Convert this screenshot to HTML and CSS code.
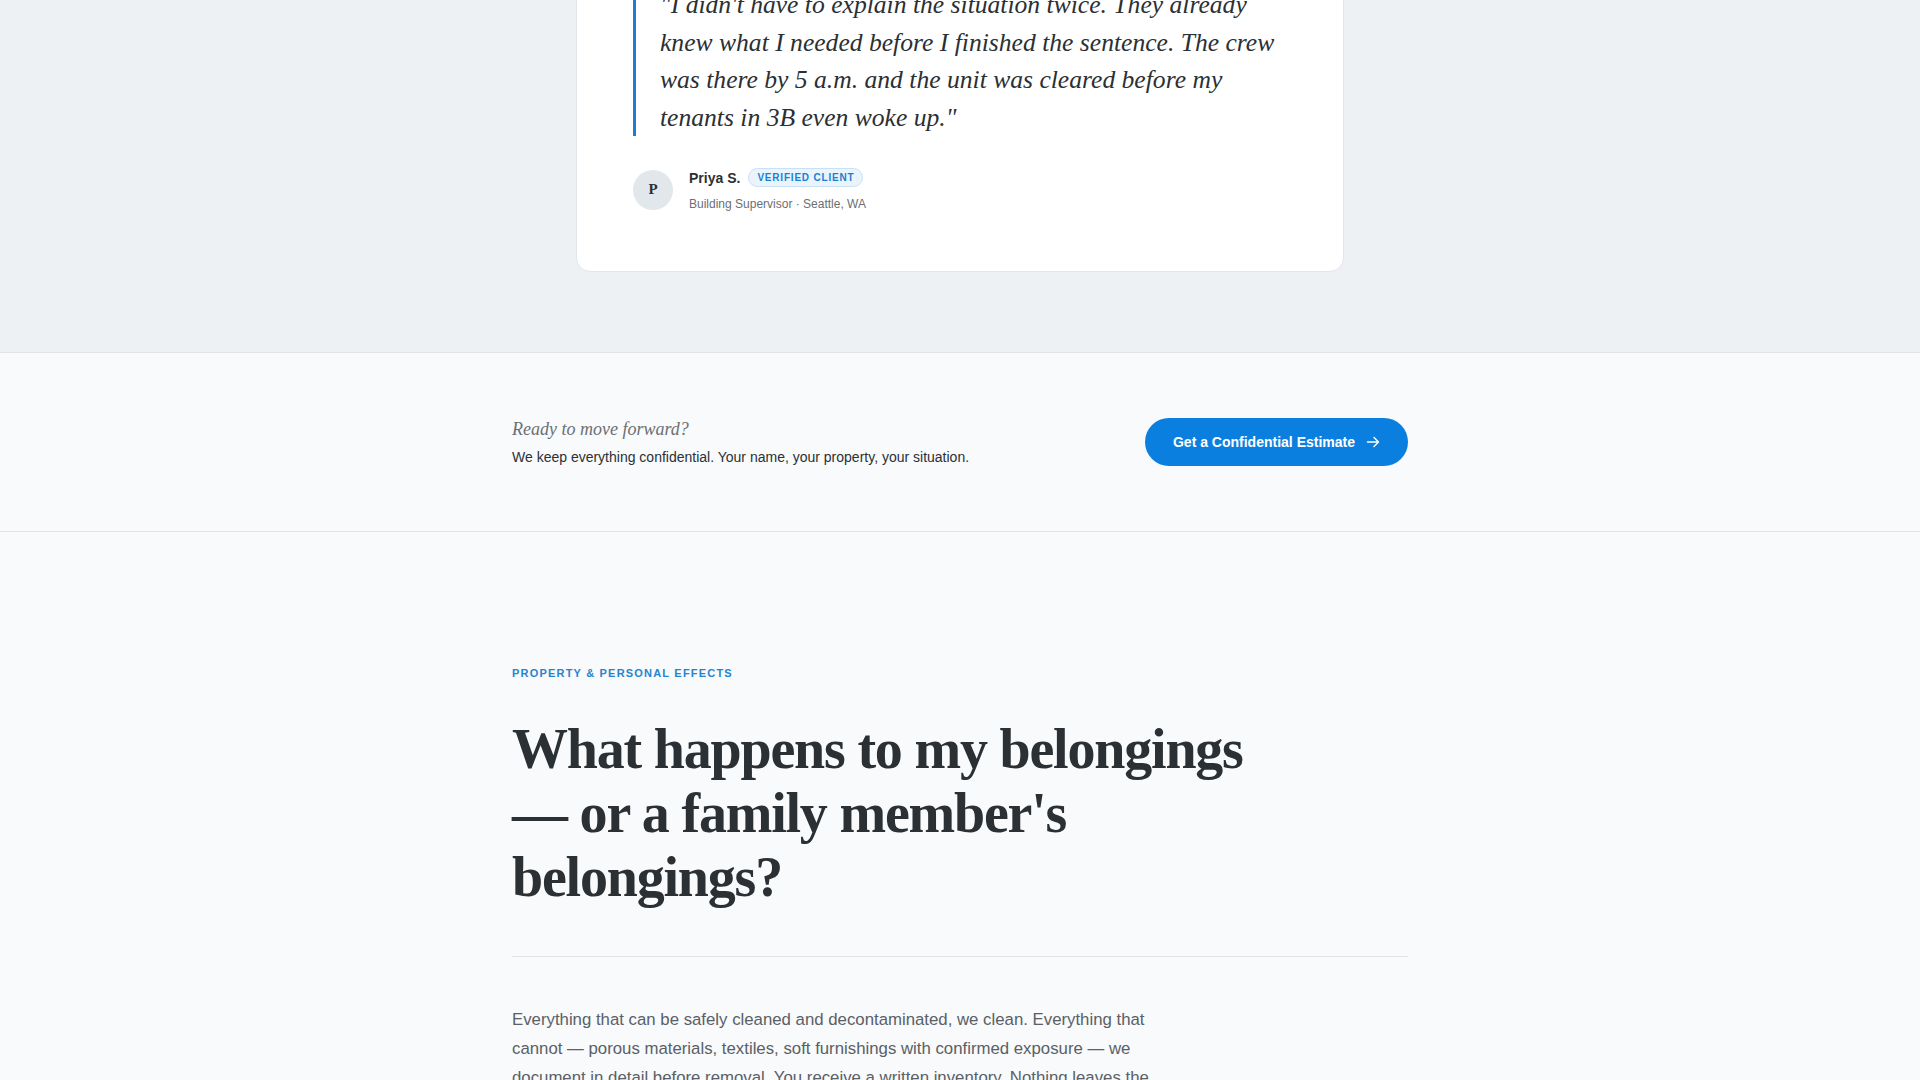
FILE: index.html
```html
<!DOCTYPE html>
<html lang="en">
<head>
  <meta charset="UTF-8" />
  <meta name="viewport" content="width=device-width, initial-scale=1.0" />
  <title>Biohazard Cleanup — Property &amp; Personal Effects</title>
  <link rel="stylesheet" href="styles.css">
</head>
<body>
  <section class="testimonials">
    <div class="card">
      <blockquote class="quote">"I didn't have to explain the situation twice. They already knew what I needed before I finished the sentence. The crew was there by 5 a.m. and the unit was cleared before my tenants in 3B even woke up."</blockquote>
      <div class="author">
        <div class="avatar">P</div>
        <div class="author-info">
          <div class="author-name">Priya S. <span class="badge">Verified client</span></div>
          <div class="author-role">Building Supervisor · Seattle, WA</div>
        </div>
      </div>
    </div>
  </section>

  <section class="cta">
    <div class="container cta-row">
      <div class="cta-text">
        <p class="cta-lead">Ready to move forward?</p>
        <p class="cta-sub">We keep everything confidential. Your name, your property, your situation.</p>
      </div>
      <a class="btn" href="#">Get a Confidential Estimate
        <svg width="16" height="16" viewBox="0 0 16 16" fill="none" stroke="currentColor" stroke-width="1.4" stroke-linecap="round" stroke-linejoin="round"><path d="M2.5 8h11M9 3.5 13.5 8 9 12.5"/></svg>
      </a>
    </div>
  </section>

  <section class="faq">
    <div class="container">
      <p class="eyebrow">Property &amp; Personal Effects</p>
      <h2 class="faq-title">What happens to my belongings — or a family member's belongings?</h2>
      <hr class="divider">
      <p class="faq-body">Everything that can be safely cleaned and decontaminated, we clean. Everything that cannot — porous materials, textiles, soft furnishings with confirmed exposure — we document in detail before removal. You receive a written inventory. Nothing leaves the property without your knowledge, and anything of personal value is set aside for you to decide on.</p>
    </div>
  </section>
</body>
</html>
```

FILE: styles.css
```css
body {
  margin: 0;
  font-family: "Liberation Sans", Arial, sans-serif;
  background: #f8fafc;
  color: #2b3034;
}
.container {
  max-width: 896px;
  margin: 0 auto;
}

/* testimonial */
.testimonials {
  background: #eef1f4;
  padding: 0 0 80px;
  border-bottom: 1px solid #dfe4e9;
}
.card {
  width: 768px;
  box-sizing: border-box;
  margin: -63px auto 0;
  padding: 48px 56px 60px;
  background: #fff;
  border: 1px solid #e1e6eb;
  border-radius: 14px;
}
.quote {
  margin: 0;
  padding-left: 24px;
  border-left: 3px solid #1a7fd4;
  font-family: "Liberation Serif", "Times New Roman", serif;
  font-style: italic;
  font-size: 25.6px;
  line-height: 37.5px;
  color: #2b3034;
}
.author {
  display: flex;
  align-items: center;
  gap: 16px;
  margin-top: 32px;
}
.avatar {
  width: 40px;
  height: 40px;
  border-radius: 50%;
  background: #e2e7eb;
  display: flex;
  align-items: center;
  justify-content: center;
  font-family: "Liberation Serif", serif;
  font-weight: bold;
  font-size: 15px;
  color: #2b3034;
}
.author-name {
  font-size: 14px;
  font-weight: bold;
  color: #2b3034;
  display: flex;
  align-items: center;
  gap: 8px;
}
.badge {
  font-size: 10px;
  font-weight: bold;
  letter-spacing: 0.8px;
  text-transform: uppercase;
  color: #1a7fd4;
  background: #eaf4fd;
  border: 1px solid #c9e1f6;
  border-radius: 999px;
  padding: 3px 8px;
}
.author-role {
  margin-top: 10px;
  font-size: 12px;
  color: #6a7075;
}

/* call to action band */
.cta {
  background: #f8fafc;
  border-bottom: 1px solid #dfe4e9;
  padding: 65px 0 65px;
}
.cta-row {
  display: flex;
  align-items: center;
  justify-content: space-between;
}
.cta-lead {
  margin: 0 0 9px;
  font-family: "Liberation Serif", serif;
  font-style: italic;
  font-size: 18px;
  color: #6a7075;
}
.cta-sub {
  margin: 0;
  font-size: 14px;
  color: #2b3034;
}
.btn {
  display: flex;
  align-items: center;
  gap: 10px;
  padding: 16px 27px 16px 28px;
  background: #0b7fe0;
  color: #fff;
  font-size: 14px;
  font-weight: bold;
  text-decoration: none;
  border-radius: 999px;
}

/* faq */
.faq {
  padding: 135px 0 80px;
}
.eyebrow {
  margin: 0 0 38px;
  font-size: 11px;
  font-weight: bold;
  letter-spacing: 1.2px;
  text-transform: uppercase;
  color: #2584d0;
}
.faq-title {
  max-width: 760px;
  margin: 0;
  font-family: "Liberation Serif", "Times New Roman", serif;
  font-size: 56px;
  line-height: 64px;
  letter-spacing: -1.2px;
  color: #2b3034;
}
.divider {
  margin: 47px 0 48px;
  border: none;
  border-top: 1px solid #e1e5e9;
}
.faq-body {
  max-width: 660px;
  margin: 0;
  font-size: 16.8px;
  line-height: 29px;
  color: #5a6066;
}
```
